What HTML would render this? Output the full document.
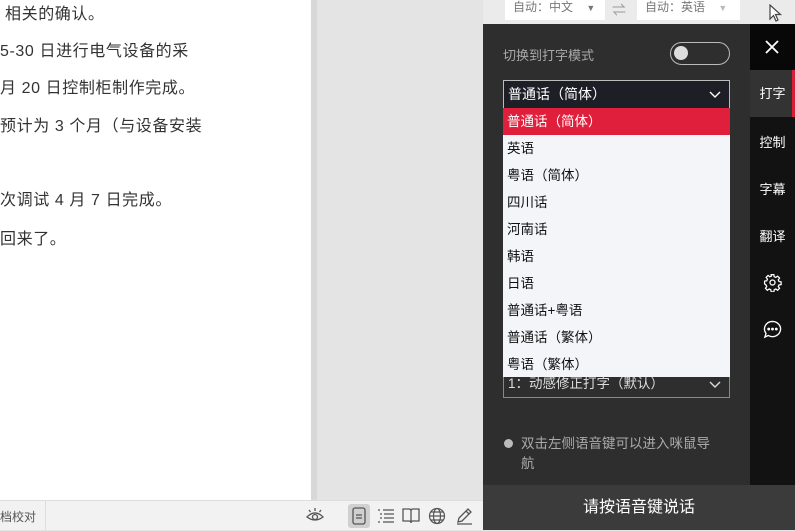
<!DOCTYPE html><html><head><meta charset="utf-8"><style>
*{margin:0;padding:0;box-sizing:border-box}
body{width:795px;height:530px;overflow:hidden;position:relative;background:#e4e4e4;font-family:"Liberation Sans","Noto Sans CJK SC",sans-serif}
.abs{position:absolute}
.doc{left:0;top:0;width:311px;height:500px;background:#fff}
.doc div{position:absolute;left:0;font-size:16px;color:#333;white-space:nowrap;letter-spacing:0.6px}
.status{left:0;top:500px;width:483px;height:30px;background:#f2f2f2;border-top:1px solid #ddd}
.panel{left:483px;top:24px;width:267px;height:506px;background:#2e2e2e}
.side{left:750px;top:24px;width:45px;height:506px;background:#121212}
.side div{position:absolute;left:0;width:45px;text-align:center;color:#fff;font-size:13px}
.li{height:27px;line-height:27px;padding-left:4px;font-size:13.5px;color:#111}
svg{position:absolute}
</style></head><body>
<div class="abs doc">
<div style="top:0;left:5px">相关的确认。</div>
<div style="top:37px">5-30 日进行电气设备的采</div>
<div style="top:74px">月 20 日控制柜制作完成。</div>
<div style="top:112px">预计为 3 个月（与设备安装</div>
<div style="top:186px">次调试 4 月 7 日完成。</div>
<div style="top:225px">回来了。</div>
</div>
<div class="abs" style="left:311px;top:0;width:6px;height:500px;background:#d8d8d8"></div>
<div class="abs" style="left:483px;top:0;width:312px;height:24px;background:#ebebeb"></div>
<div class="abs" style="left:505px;top:0;width:100px;height:20px;background:#fff;font-size:12px;color:#777;padding:0 0 0 8px;line-height:14px">自动：中文 <span style="margin-left:10px;font-size:9px">▼</span></div>
<div class="abs" style="left:612px;top:0;font-size:14px;color:#999">⇌</div>
<div class="abs" style="left:637px;top:0;width:103px;height:20px;background:#fff;font-size:12px;color:#777;padding-left:8px;line-height:14px">自动：英语 <span style="margin-left:10px;font-size:9px;color:#bbb">▼</span></div>
<svg style="left:768px;top:4px" width="16" height="18" viewBox="0 0 16 18"><path d="M2 1 L2 15 L5.5 11.5 L8 17 L10 16 L7.5 10.5 L12.5 10.5 Z" fill="#fff" stroke="#444" stroke-width="1.2"/></svg>
<div class="abs status"><span style="position:absolute;left:0;top:7px;font-size:12px;color:#555">档校对</span>
<span style="position:absolute;left:45px;top:0;width:1px;height:30px;background:#ddd"></span>
<svg style="left:305px;top:5px" width="20" height="18" viewBox="0 0 20 18" fill="none" stroke="#555" stroke-width="1.3"><path d="M2 11 Q10 3 18 11 Q10 17 2 11Z"/><circle cx="10" cy="11" r="2.5"/><path d="M10 2v3M4 4l1.5 2M16 4l-1.5 2"/></svg>
<span style="position:absolute;left:348px;top:3px;width:22px;height:24px;background:#d0d0d0;border-radius:3px"></span>
<svg style="left:352px;top:6px" width="14" height="18" viewBox="0 0 14 18" fill="none" stroke="#555" stroke-width="1.3"><rect x="1" y="1" width="12" height="16" rx="2"/><path d="M4 8h6M4 11h6"/></svg>
<svg style="left:377px;top:7px" width="18" height="16" viewBox="0 0 18 16" fill="none" stroke="#555" stroke-width="1.2"><path d="M1 2h2M6 2h11M3 6h2M7 6h10M3 10h2M7 10h10M1 14h2M6 14h11"/></svg>
<svg style="left:402px;top:6px" width="18" height="17" viewBox="0 0 18 17" fill="none" stroke="#555" stroke-width="1.3"><path d="M1 2h6q2 0 2 2v12q0-2-2-2H1zM17 2h-6q-2 0-2 2v12q0-2 2-2h6z"/></svg>
<svg style="left:428px;top:6px" width="18" height="18" viewBox="0 0 18 18" fill="none" stroke="#555" stroke-width="1.2"><circle cx="9" cy="9" r="7.5"/><ellipse cx="9" cy="9" rx="3.5" ry="7.5"/><path d="M1.5 9h15M3 5h12M3 13h12"/></svg>
<svg style="left:455px;top:5px" width="19" height="19" viewBox="0 0 19 19" fill="none" stroke="#555" stroke-width="1.3"><path d="M3 16l1-4L13 3l3 3-9 9zM11 5l3 3M2 18h15"/></svg></div>
<div class="abs panel">
<div class="abs" style="left:20px;top:21px;font-size:13px;color:#aaa">切换到打字模式</div>
<div class="abs" style="left:187px;top:18px;width:60px;height:23px;border:1.5px solid #bbb;border-radius:12px"><div style="position:absolute;left:3px;top:3px;width:14px;height:14px;border-radius:50%;background:#ddd"></div></div>
<div class="abs" style="left:20px;top:56px;width:227px;height:29px;background:#1e1f26;border:1px solid #bbb;color:#fff;font-size:14px;line-height:27px;padding-left:4px">普通话（简体）<svg style="right:8px;top:10px" width="12" height="8" viewBox="0 0 12 8" fill="none" stroke="#fff" stroke-width="1.4"><path d="M1 1l5 5 5-5"/></svg></div>
<div class="abs" style="left:20px;top:346px;width:227px;height:28px;border:1px solid #888;color:#ddd;font-size:13.5px;line-height:26px;padding-left:4px">1：动感修正打字（默认）<svg style="right:8px;top:10px" width="12" height="8" viewBox="0 0 12 8" fill="none" stroke="#ddd" stroke-width="1.4"><path d="M1 1l5 5 5-5"/></svg></div>
<div class="abs" style="left:20px;top:84px;width:227px;height:269px;background:#f3f5f8">
<div class="li" style="background:#df1f3b;color:#fff">普通话（简体）</div>
<div class="li">英语</div><div class="li">粤语（简体）</div><div class="li">四川话</div><div class="li">河南话</div><div class="li">韩语</div><div class="li">日语</div><div class="li">普通话+粤语</div><div class="li">普通话（繁体）</div><div class="li">粤语（繁体）</div>
</div>
<div class="abs" style="left:21px;top:415px;width:9px;height:9px;border-radius:50%;background:#bbb"></div>
<div class="abs" style="left:38px;top:410px;width:190px;font-size:13.5px;line-height:20px;color:#aaa">双击左侧语音键可以进入咪鼠导航</div>
</div>
<div class="abs side">
<div style="top:0;height:46px;background:#080808"><svg style="left:15px;top:16px" width="14" height="14" viewBox="0 0 14 14" stroke="#fff" stroke-width="1.8"><path d="M1 1l12 12M13 1L1 13"/></svg></div>
<div style="top:46px;height:47px;background:#333;line-height:47px">打字<span style="position:absolute;right:0;top:0;width:3px;height:47px;background:#d6203a"></span></div>
<div style="top:108px">控制</div>
<div style="top:155px">字幕</div>
<div style="top:202px">翻译</div>
<svg style="left:13px;top:249px" width="19" height="19" viewBox="0 0 24 24" fill="none" stroke="#fff" stroke-width="1.6"><circle cx="12" cy="12" r="3.2"/><path d="M10.3 2h3.4l.5 2.7 2 .9 2.3-1.6 2.4 2.4-1.6 2.3.9 2 2.7.5v3.4l-2.7.5-.9 2 1.6 2.3-2.4 2.4-2.3-1.6-2 .9-.5 2.7h-3.4l-.5-2.7-2-.9-2.3 1.6-2.4-2.4 1.6-2.3-.9-2L2 13.7v-3.4l2.7-.5.9-2L4 5.5 6.4 3.1l2.3 1.6 2-.9z"/></svg>
<svg style="left:13px;top:296px" width="19" height="19" viewBox="0 0 20 20" fill="none" stroke="#fff" stroke-width="1.4"><path d="M10 1.5a8.5 8 0 1 1-4.5 14.8L2 18l1.2-3.8A8.5 8 0 0 1 10 1.5z"/><circle cx="6" cy="9.5" r=".8" fill="#fff"/><circle cx="10" cy="9.5" r=".8" fill="#fff"/><circle cx="14" cy="9.5" r=".8" fill="#fff"/></svg>
</div>
<div class="abs" style="left:483px;top:485px;width:312px;height:45px;background:#3b3b3b;color:#fff;font-size:16px;line-height:45px;padding-left:100px">请按语音键说话</div>
</body></html>
